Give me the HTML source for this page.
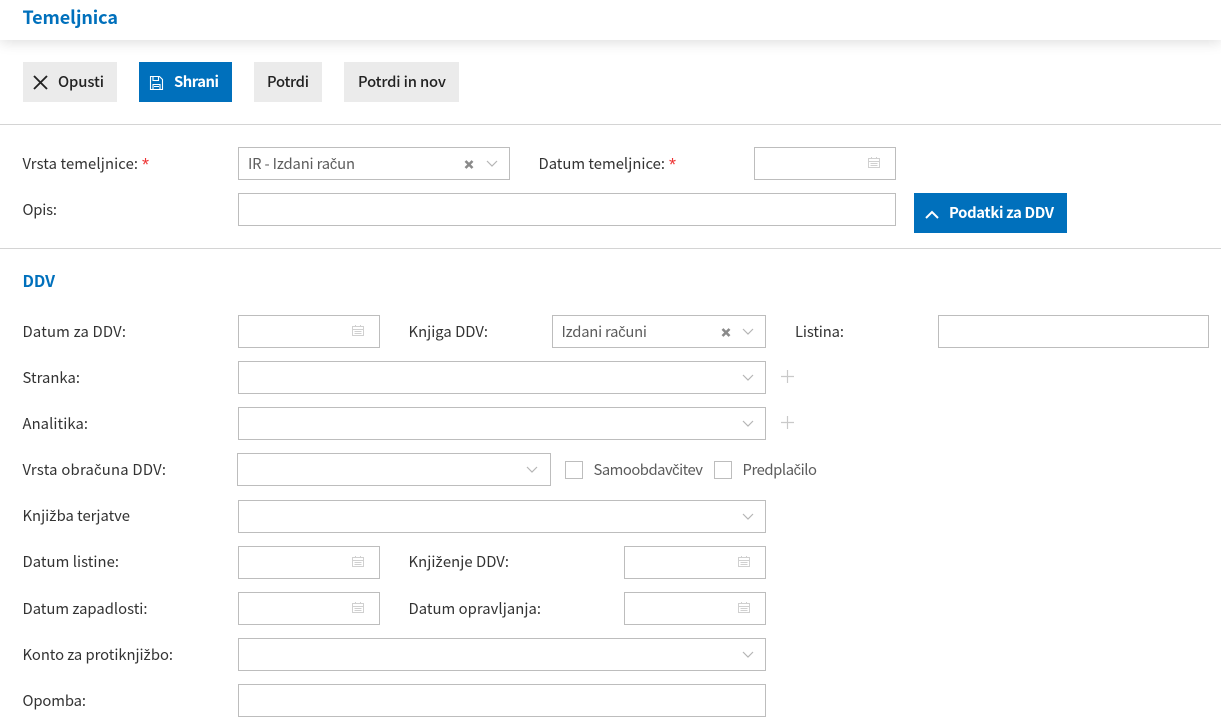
<!DOCTYPE html>
<html lang="sl"><head><meta charset="utf-8"><title>Temeljnica</title>
<style>
html,body{margin:0;padding:0;background:#fff;width:1221px;height:727px;overflow:hidden}
.hd{position:absolute;left:0;top:0;width:1221px;height:40px;background:#fff;box-shadow:0 2px 14px rgba(0,0,0,.14)}
.b{position:absolute;box-sizing:border-box;border:1px solid #bdbdbd;background:#fff;height:33px}
.btn{position:absolute;top:62px;height:40px;background:#ebebeb}
.line{position:absolute;left:0;width:1221px;height:1px;background:#d4d4d4}
.cb{position:absolute;box-sizing:border-box;top:461px;width:18px;height:18px;border:1px solid #bdbdbd;background:#fff}
svg.o{position:absolute;left:0;top:0}
text{font-family:"Noto Sans CJK SC","Liberation Sans",sans-serif;font-size:14.8px;fill:#333}
tspan.c{font-family:"Liberation Sans",sans-serif}
.v{fill:#5c5c5c}
text.w{fill:#fff;font-weight:700}
text.d{fill:#222;font-weight:500}
text.r{fill:#ee3333;font-family:"Liberation Sans",sans-serif;font-size:18px}
text.bl{fill:#0070bc;font-weight:700}
.cal{fill:none;stroke:#d0d0d0;stroke-width:1}
.chev{fill:none;stroke:#b5b5b5;stroke-width:1.2}
.x{fill:none;stroke:#8a8a8a;stroke-width:2.6}
.p{fill:none;stroke:#c9c9c9;stroke-width:1.2}
</style></head><body>
<div class="hd"></div>
<div class="btn" style="left:23px;width:94px"></div>
<div class="btn" style="left:139px;width:93px;background:#0070bc"></div>
<div class="btn" style="left:254px;width:68px"></div>
<div class="btn" style="left:344px;width:115px"></div>
<div class="line" style="top:124px"></div>
<div class="line" style="top:248px"></div>

<div class="b" style="left:238px;top:147px;width:272px"></div>
<div class="b" style="left:754px;top:147px;width:142px"></div>
<div class="b" style="left:238px;top:193px;width:658px"></div>
<div class="btn" style="left:914px;top:193px;width:153px;background:#0070bc"></div>

<div class="b" style="left:238px;top:315px;width:142px"></div>
<div class="b" style="left:552px;top:315px;width:214px"></div>
<div class="b" style="left:938px;top:315px;width:271px"></div>
<div class="b" style="left:238px;top:361px;width:528px"></div>
<div class="b" style="left:238px;top:407px;width:528px"></div>
<div class="b" style="left:237px;top:453px;width:314px"></div>
<div class="cb" style="left:565px"></div>
<div class="cb" style="left:714px"></div>
<div class="b" style="left:238px;top:500px;width:528px"></div>
<div class="b" style="left:238px;top:546px;width:142px"></div>
<div class="b" style="left:624px;top:546px;width:142px"></div>
<div class="b" style="left:238px;top:592px;width:142px"></div>
<div class="b" style="left:624px;top:592px;width:142px"></div>
<div class="b" style="left:238px;top:638px;width:528px"></div>
<div class="b" style="left:238px;top:684px;width:528px"></div>

<svg class="o" width="1221" height="727" viewBox="0 0 1221 727">
<defs>
<g id="cal"><path class="cal" d="M.5 2.500h11v9H.5zM.5 5.500h11M3.500 1v2M8.500 1v2M2.500 7.500h7M2.500 9.500h7"/></g>
<g id="chev"><path class="chev" d="M0 0l5 5 5-5"/></g>
<g id="xx"><path class="x" d="M-.5-.5l7 7M6.500-.5l-7 7"/></g>
<g id="plus"><path class="p" d="M6.500 0v13M0 6.500h13"/></g>
</defs>

<text x="22.500" y="24" class="bl" style="font-size:18px" textLength="95.500" lengthAdjust="spacing">Temeljnica</text>

<path d="M34 76l13 13M47 76l-13 13" fill="none" stroke="#222" stroke-width="1.900"/>
<text x="58" y="87" class="d" textLength="46" lengthAdjust="spacing">Opusti</text>
<path d="M150.500 76.500h9l3 3v10h-12z M153 76.500v4h5.500v-4 M153 89.500v-5h7v5 M154 86.500h5" fill="none" stroke="#fff" stroke-width="1.100"/>
<text x="174" y="87" class="w" textLength="45" lengthAdjust="spacing">Shrani</text>
<text x="267" y="87" class="d" textLength="42" lengthAdjust="spacing">Potrdi</text>
<text x="358" y="87" class="d" textLength="88" lengthAdjust="spacing">Potrdi in nov</text>

<text x="22.500" y="169" textLength="115.500" lengthAdjust="spacing">Vrsta temeljnice:</text>
<text x="142" y="171" class="r">*</text>
<text x="248" y="169" class="v" textLength="107" lengthAdjust="spacing">IR - Izdani ra<tspan class="c">č</tspan>un</text>
<use href="#xx" x="466" y="161.500"/><use href="#chev" x="487" y="161"/>
<text x="538.500" y="169" textLength="126.500" lengthAdjust="spacing">Datum temeljnice:</text>
<text x="669" y="171" class="r">*</text>
<use href="#cal" x="868" y="156"/>

<text x="22.500" y="215" textLength="34.500" lengthAdjust="spacing">Opis:</text>
<path d="M926 218l6-6 6 6" fill="none" stroke="#fff" stroke-width="2"/>
<text x="949" y="218" class="w" textLength="105" lengthAdjust="spacing">Podatki za DDV</text>

<text x="22.500" y="287" class="bl" style="font-size:16px" textLength="32.500" lengthAdjust="spacing">DDV</text>

<text x="22.500" y="337" textLength="103.500" lengthAdjust="spacing">Datum za DDV:</text>
<use href="#cal" x="352" y="324"/>
<text x="408.500" y="337" textLength="79.500" lengthAdjust="spacing">Knjiga DDV:</text>
<text x="561.500" y="337" class="v" textLength="85.500" lengthAdjust="spacing">Izdani ra<tspan class="c">č</tspan>uni</text>
<use href="#xx" x="723" y="329.500"/><use href="#chev" x="743" y="329"/>
<text x="795" y="337" textLength="49" lengthAdjust="spacing">Listina:</text>

<text x="22.500" y="383" textLength="57.500" lengthAdjust="spacing">Stranka:</text>
<use href="#chev" x="743" y="375"/><use href="#plus" x="781" y="370"/>
<text x="22.500" y="429" textLength="65.500" lengthAdjust="spacing">Analitika:</text>
<use href="#chev" x="743" y="421"/><use href="#plus" x="781" y="416"/>
<text x="22.500" y="475" textLength="143.500" lengthAdjust="spacing">Vrsta obra<tspan class="c">č</tspan>una DDV:</text>
<use href="#chev" x="527" y="467"/>
<text x="593.500" y="475" class="v" textLength="109.500" lengthAdjust="spacing">Samoobdav<tspan class="c">č</tspan>itev</text>
<text x="742.500" y="475" class="v" textLength="74.500" lengthAdjust="spacing">Predpla<tspan class="c">č</tspan>ilo</text>
<text x="22.500" y="521" textLength="107.500" lengthAdjust="spacing">Knji<tspan class="c">ž</tspan>ba terjatve</text>
<use href="#chev" x="743" y="514"/>
<text x="22.500" y="567" textLength="96.500" lengthAdjust="spacing">Datum listine:</text>
<use href="#cal" x="352" y="555"/>
<text x="408.500" y="567" textLength="100.500" lengthAdjust="spacing">Knji<tspan class="c">ž</tspan>enje DDV:</text>
<use href="#cal" x="738" y="555"/>
<text x="22.500" y="614" textLength="125" lengthAdjust="spacing">Datum zapadlosti:</text>
<use href="#cal" x="352" y="601"/>
<text x="408.500" y="614" textLength="132.500" lengthAdjust="spacing">Datum opravljanja:</text>
<use href="#cal" x="738" y="601"/>
<text x="22.500" y="660" textLength="150.500" lengthAdjust="spacing">Konto za protiknji<tspan class="c">ž</tspan>bo:</text>
<use href="#chev" x="743" y="652"/>
<text x="22.500" y="706" textLength="63.500" lengthAdjust="spacing">Opomba:</text>
</svg>
</body></html>
